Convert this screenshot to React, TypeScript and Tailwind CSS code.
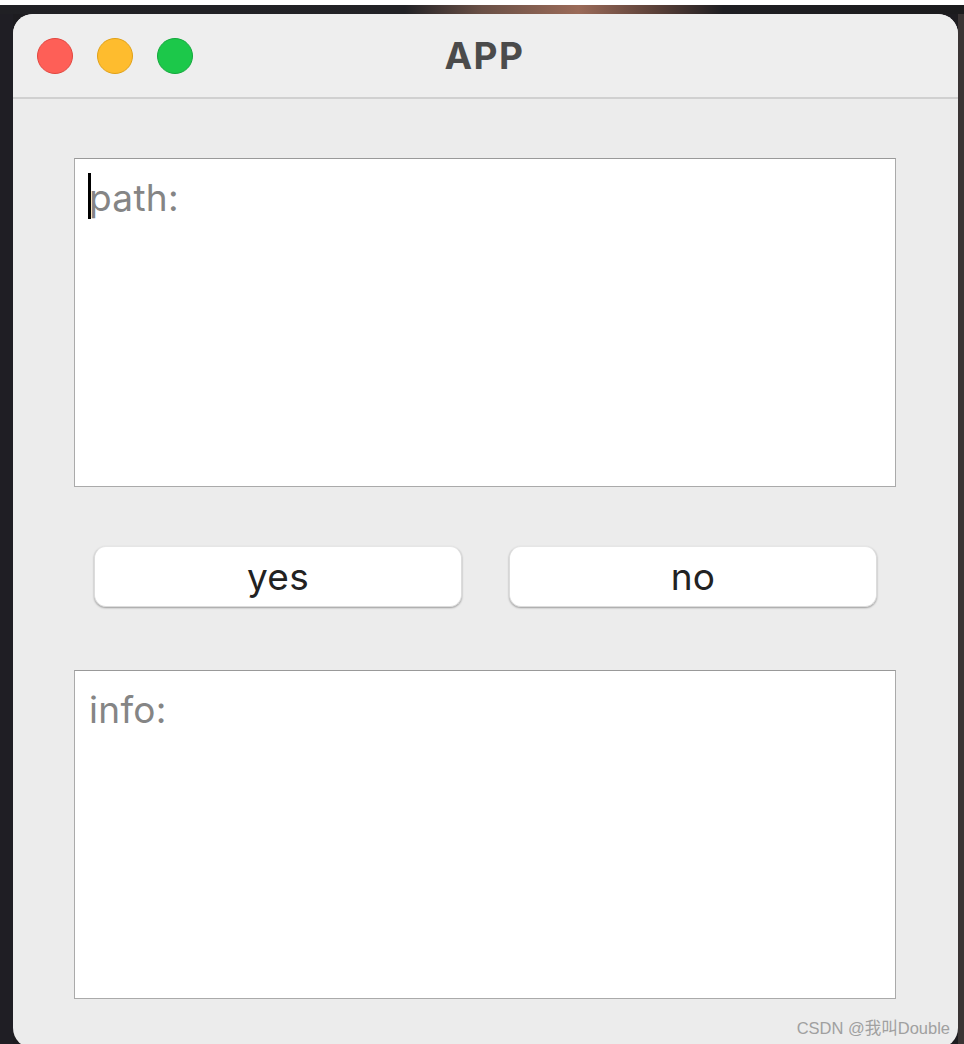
import React from "react";

const font = { fontFamily: "Inter, 'Noto Sans', sans-serif" };

const Lights = () => (
  <div className="flex items-center gap-[24px] pl-[24px]">
    <span className="block w-[36px] h-[36px] rounded-full bg-[#fe5f57] border border-[#e2463f]" />
    <span className="block w-[36px] h-[36px] rounded-full bg-[#febc2e] border border-[#e1a116]" />
    <span className="block w-[36px] h-[36px] rounded-full bg-[#1cc84a] border border-[#13a83c]" />
  </div>
);

const TextBox = ({ label, cursor }: { label: string; cursor?: boolean }) => (
  <div className="relative w-[822px] h-[329px] bg-white border border-[#aaaaaa] border-t-[#999999]">
    <div className="flex items-center pl-[14px] pt-[17px] text-[37px] leading-[44px] tracking-[0.3px] text-[#858585]">
      {cursor && <span className="absolute left-[13px] top-[14px] w-[3px] h-[46px] bg-black" />}
      {label}
    </div>
  </div>
);

const Btn = ({ label }: { label: string }) => (
  <button className="w-[368px] h-[61px] rounded-[12px] bg-white text-[37px] tracking-[0.3px] text-[#222222] shadow-[0_1px_2px_rgba(0,0,0,0.35)] border border-[#dcdcdc] border-t-[#e6e6e6] flex items-center justify-center">
    {label}
  </button>
);

export default function App() {
  return (
    <div className="w-[964px] h-[1044px] overflow-hidden bg-[#1d1c20]" style={font}>
      <div className="h-[5px] bg-white" />
      <div className="h-[9px] bg-[linear-gradient(90deg,#202024_0%,#222226_42%,#6a5046_50%,#9a6a58_60%,#5a4038_68%,#1e1e22_75%,#1b1b1d_100%)]" />
      <div className="flex">
        <div className="w-[13px] h-[1030px] bg-[#1f1e24]" />
        <div className="w-[945px] h-[1034px] rounded-[20px] overflow-hidden bg-[#ececec] flex flex-col">
          <div className="relative h-[85px] bg-[#eeeeee] border-b-[2px] border-[#d0d0d0] flex items-center shrink-0">
            <Lights />
            <div className="absolute inset-0 flex items-center justify-center pr-[2px] text-[37px] font-bold text-[#4b4b4b] tracking-[1.5px]">
              APP
            </div>
          </div>
          <div className="flex flex-col pl-[61px] pt-[59px]">
            <TextBox label="path:" cursor />
            <div className="flex gap-[47px] pl-[20px] pt-[59px] pb-[63px]">
              <Btn label="yes" />
              <Btn label="no" />
            </div>
            <TextBox label="info:" />
            <div className="flex justify-end pr-[8px] pt-[17px] text-[16.5px] text-[#a0a0a0]" style={{ fontFamily: "'Liberation Sans', 'Noto Sans CJK SC', sans-serif" }}>
              CSDN @我叫Double
            </div>
          </div>
        </div>
        <div className="w-[6px] h-[1030px] bg-[#3a3434]" />
      </div>
    </div>
  );
}
